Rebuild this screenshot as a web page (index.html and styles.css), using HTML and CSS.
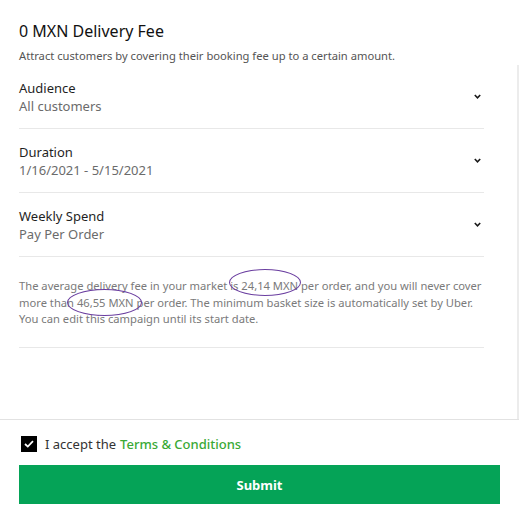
FILE: index.html
```html
<!DOCTYPE html>
<html>
<head>
  <meta charset="UTF-8">
  <title>Delivery Fee Campaign</title>
  <link rel="stylesheet" href="styles.css">
</head>
<body>
  <div class="header">
    <h1>0 MXN Delivery Fee</h1>
    <div class="subtitle">Attract customers by covering their booking fee up to a certain amount.</div>
  </div>

  <div class="scroll">
    <div class="content">
      <div class="row">
        <div class="row-text">
          <div class="label">Audience</div>
          <div class="value">All customers</div>
        </div>
        <svg class="chevron" width="7" height="5" viewBox="0 0 7 5"><path d="M0.8 1 L3.5 3.8 L6.2 1" fill="none" stroke="#1a1a1a" stroke-width="1.6"/></svg>
      </div>
      <div class="row">
        <div class="row-text">
          <div class="label">Duration</div>
          <div class="value">1/16/2021 - 5/15/2021</div>
        </div>
        <svg class="chevron" width="7" height="5" viewBox="0 0 7 5"><path d="M0.8 1 L3.5 3.8 L6.2 1" fill="none" stroke="#1a1a1a" stroke-width="1.6"/></svg>
      </div>
      <div class="row">
        <div class="row-text">
          <div class="label">Weekly Spend</div>
          <div class="value">Pay Per Order</div>
        </div>
        <svg class="chevron" width="7" height="5" viewBox="0 0 7 5"><path d="M0.8 1 L3.5 3.8 L6.2 1" fill="none" stroke="#1a1a1a" stroke-width="1.6"/></svg>
      </div>

      <div class="note">
        The average delivery fee in your market is 24,14 MXN per order, and you will never cover<br>
        more than 46,55 MXN per order. The minimum basket size is automatically set by Uber.<br>
        You can edit this campaign until its start date.
        <span class="mark mark-one"></span>
        <span class="mark mark-two"></span>
      </div>
    </div>
  </div>

  <div class="footer">
    <label class="accept">
      <span class="checkbox">
        <svg width="10" height="8" viewBox="0 0 10 8"><path d="M1 4 L3.8 6.6 L9 1.2" fill="none" stroke="#fff" stroke-width="1.8"/></svg>
      </span>
      I accept the <a href="#" class="terms">Terms &amp; Conditions</a>
    </label>
    <button class="submit">Submit</button>
  </div>
</body>
</html>
```

FILE: styles.css
```css
body {
  font-family: 'Noto Sans', 'Open Sans', sans-serif;
  margin: 0;
  color: #1f1f1f;
  background: #fff;
}
.header {
  padding: 20px 19px 1px;
}
h1 {
  font-size: 16px;
  font-weight: 400;
  line-height: 22px;
  margin: 0;
  color: #111;
}
.subtitle {
  font-size: 11.2px;
  line-height: 16px;
  margin-top: 6px;
  color: #545454;
}
.scroll {
  height: 354px;
  border-right: 2px solid #ececec;
  box-sizing: border-box;
}
.content {
  width: 465px;
  margin-left: 19px;
}
.row {
  display: flex;
  align-items: center;
  justify-content: space-between;
  padding: 14px 0 13px;
  border-bottom: 1px solid #e8e8e8;
}
.label {
  font-size: 13px;
  line-height: 18px;
  color: #1f1f1f;
}
.value {
  font-size: 13px;
  line-height: 18px;
  color: #6b6b6b;
}
.chevron {
  margin-right: 3px;
  margin-top: -2px;
}
.note {
  position: relative;
  font-size: 11.2px;
  line-height: 16.5px;
  color: #7a7a7a;
  padding: 21px 0 19px;
  border-bottom: 1px solid #e8e8e8;
  white-space: nowrap;
}
.mark {
  position: absolute;
  border: 1.5px solid #6b3fa0;
  border-radius: 50%;
}
.mark-one {
  left: 210px;
  top: 12px;
  width: 70px;
  height: 25px;
}
.mark-two {
  left: 48px;
  top: 32px;
  width: 73px;
  height: 25px;
}
.footer {
  border-top: 1px solid #e2e2e2;
  padding: 15px 19px;
}
.accept {
  display: flex;
  align-items: center;
  font-size: 13px;
  color: #333;
  margin-left: 2px;
}
.checkbox {
  width: 16px;
  height: 16px;
  background: #000;
  display: flex;
  align-items: center;
  justify-content: center;
  margin-right: 8px;
}
.terms {
  color: #3aa935;
  text-decoration: none;
  font-weight: 500;
  margin-left: 4px;
}
.submit {
  display: block;
  width: 100%;
  height: 39px;
  margin-top: 12px;
  border: none;
  background-color: #05a357;
  color: #fff;
  font-family: 'Noto Sans', 'Open Sans', sans-serif;
  font-size: 13px;
  font-weight: 700;
  cursor: pointer;
}
```
